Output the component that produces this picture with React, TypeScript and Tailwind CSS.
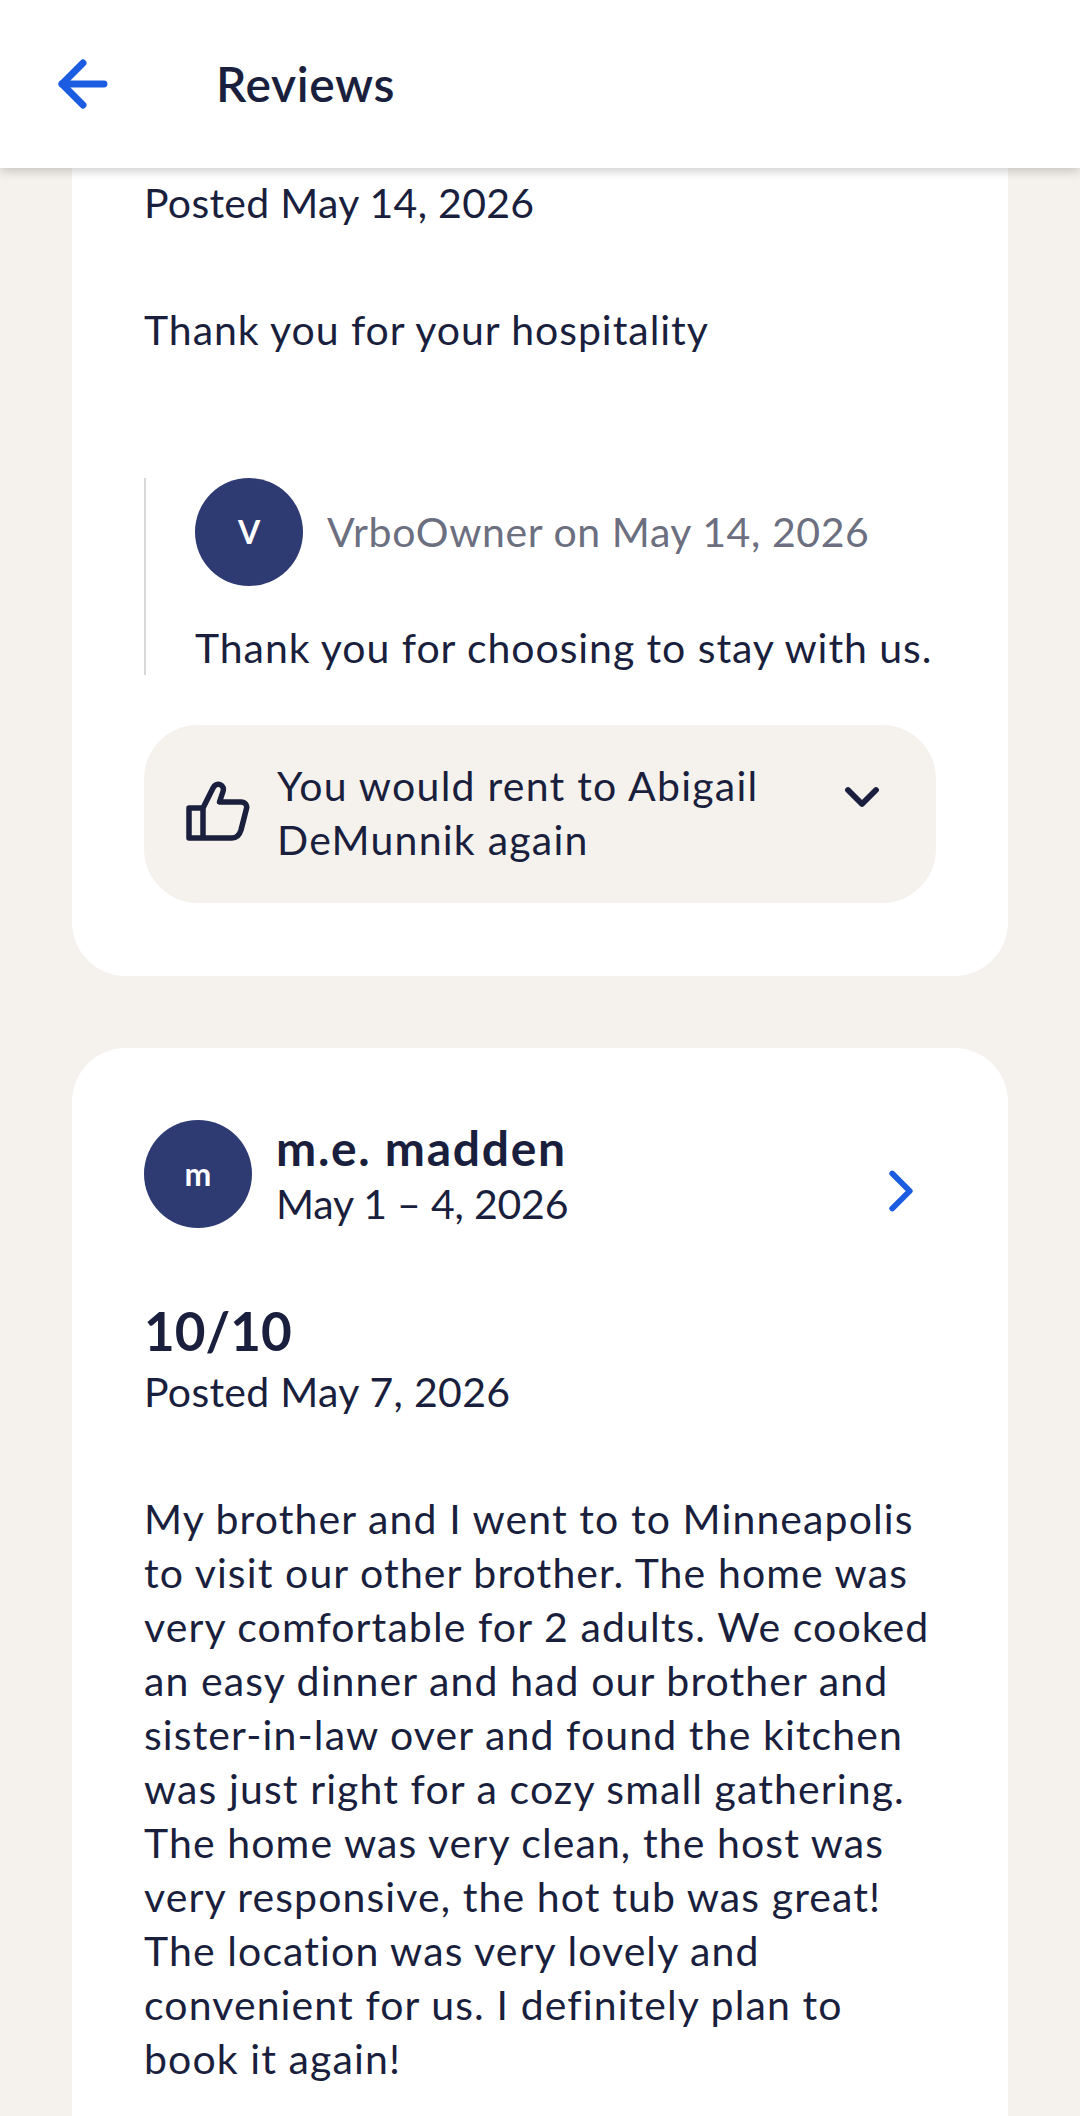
import { ArrowLeft, ChevronDown, ChevronRight } from "lucide-react";

function Avatar({ letter }: { letter: string }) {
  return (
    <div className="flex size-[108px] shrink-0 items-center justify-center rounded-full bg-[#2e3a72] text-[32px] font-bold tracking-normal text-white">
      {letter}
    </div>
  );
}

function ThumbUp() {
  return (
    <svg viewBox="0 0 64 60" className="-mt-[6px] h-[60px] w-[64px] shrink-0" fill="none" stroke="#1a1f3d" strokeWidth="5.5" strokeLinejoin="round">
      <path d="M17 27 27 7c1.5-3 4.5-4.5 7-3.5 3 1.2 4 4 3 7L33.5 21H55c4 0 6.5 3 5.5 6.5L55 49c-1.5 5-4.5 8-9 8H3V27H17V57" />
    </svg>
  );
}

export default function App() {
  return (
    <div className="h-[2116px] w-[1080px] overflow-hidden bg-[#f5f2ed] font-['Lato',sans-serif] text-[41px] leading-[54px] tracking-[1.1px] text-[#1a1f3d]">
      <header className="relative z-10 flex h-[168px] items-center bg-white shadow-[0_3px_10px_rgba(0,0,0,0.2)]">
        <ArrowLeft className="ml-[47px] size-[72px] text-[#1b5ce0]" strokeWidth={2.3} />
        <h1 className="ml-[97px] text-[48px] font-semibold tracking-[0.6px]">Reviews</h1>
      </header>

      <main className="flex h-[1948px] flex-col gap-[72px] px-[72px]">
        <section className="rounded-b-[54px] bg-white px-[72px] pb-[73px] pt-[8px]">
          <p className="tracking-[0.3px]">Posted May 14, 2026</p>
          <p className="mt-[73px] tracking-[0.95px]">Thank you for your hospitality</p>

          <div className="mt-[121px] border-l-2 border-[#d8d8d8] pl-[49px]">
            <div className="flex items-center gap-6">
              <Avatar letter="V" />
              <p className="whitespace-nowrap tracking-[0.6px] text-[#6b6f80]">VrboOwner on May 14, 2026</p>
            </div>
            <p className="mt-[35px] whitespace-nowrap tracking-[0.93px]">Thank you for choosing to stay with us.</p>
          </div>

          <div className="mt-[50px] flex h-[178px] items-center rounded-[54px] bg-[#f5f2ed] pl-[42px] pr-[46px]">
            <ThumbUp />
            <p className="-mt-[3px] ml-[27px] w-[540px] tracking-[1.25px]">
              You would rent to Abigail
              <br />
              DeMunnik again
            </p>
            <ChevronDown className="-mt-[34px] ml-auto size-[56px]" strokeWidth={2.5} />
          </div>
        </section>

        <section className="flex-1 rounded-t-[54px] bg-white px-[72px] pt-[72px]">
          <div className="flex h-[108px] items-center">
            <Avatar letter="m" />
            <div className="ml-[24px] mt-[4px]">
              <p className="text-[48px] font-bold tracking-[1.7px]">m.e. madden</p>
              <p className="mt-[2px] tracking-[-0.2px]">May 1 – 4, 2026</p>
            </div>
            <ChevronRight className="ml-auto mt-[34px] size-[70px] text-[#1b5ce0]" strokeWidth={2} />
          </div>

          <p className="mt-[71px] text-[53px] font-bold leading-[64px] tracking-normal">10/10</p>
          <p className="mt-[2px] tracking-[0.3px]">Posted May 7, 2026</p>
          <p className="mt-[73px]">
            My brother and I went to to Minneapolis
            <br />
            to visit our other brother. The home was
            <br />
            very comfortable for 2 adults. We cooked
            <br />
            an easy dinner and had our brother and
            <br />
            sister-in-law over and found the kitchen
            <br />
            was just right for a cozy small gathering.
            <br />
            The home was very clean, the host was
            <br />
            very responsive, the hot tub was great!
            <br />
            The location was very lovely and
            <br />
            convenient for us. I definitely plan to
            <br />
            book it again!
          </p>
        </section>
      </main>
    </div>
  );
}
